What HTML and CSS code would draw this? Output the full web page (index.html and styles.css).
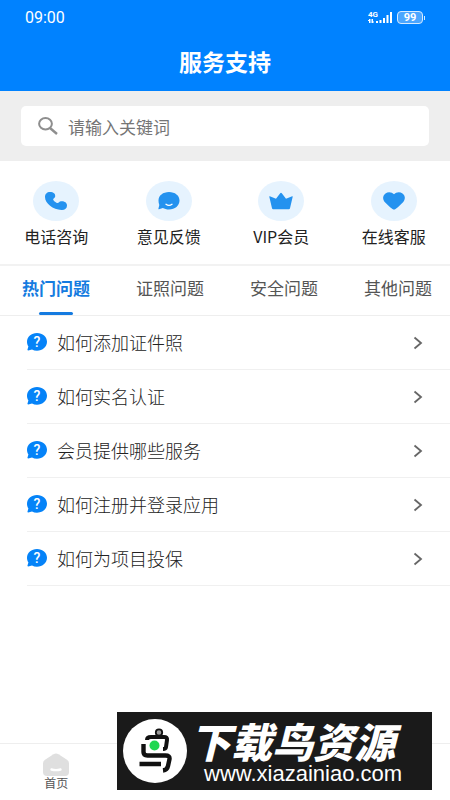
FILE: index.html
```html
<!DOCTYPE html>
<html lang="zh-CN">
<head>
<meta charset="utf-8">
<meta name="viewport" content="width=device-width, initial-scale=1">
<title>服务支持</title>
<link rel="stylesheet" href="styles.css">
</head>
<body>
<svg class="defs" aria-hidden="true">
  <symbol id="bubble" viewBox="0 0 20 18">
    <path d="M10 0C15.6 0 20 3.8 20 8.800s-4.400 8.900-10 8.900c-1.900 0-3.500-.4-5-1.200L1.200 17.400c-.5.100-.9-.3-.7-.8l.9-3C.5 12.200 0 10.600 0 8.800 0 3.800 4.400 0 10 0z" fill="#0583f8"/>
  </symbol>
  <symbol id="chevron" viewBox="0 0 10 14">
    <path d="M1.500 1.500 8 7 1.500 12.500" fill="none" stroke="#666" stroke-width="1.800"/>
  </symbol>
</svg>

<header class="header">
  <div class="status">
    <span class="clock">09:00</span>
    <span class="indicators">
      <svg width="25" height="14" viewBox="0 0 25 14" fill="#fff" aria-hidden="true">
        <text x="0" y="7" class="network">4G</text>
        <path d="M1 9h1.500v4H1zM0 10h2.500v1H0zM3.500 9H5v4H3.500zM3.500 11.500H6v1H3.500zM8 11h2v2H8zM11.500 10h2v3h-2zM15 8h2v5h-2zM18.500 5h2v8h-2zM22 2h2v11h-2z"/>
      </svg>
      <span class="battery">99</span>
    </span>
  </div>
  <h1 class="title">服务支持</h1>
</header>

<main class="main">
  <form class="search">
    <label class="search-box">
      <svg width="20" height="18" viewBox="0 0 20 18" fill="none" stroke="#8e8e8e" stroke-width="2" aria-hidden="true">
        <ellipse cx="7.500" cy="6.800" rx="6.400" ry="5.700"/><path d="M12 11l7 6" stroke-width="2.400"/>
      </svg>
      <input type="text" placeholder="请输入关键词" aria-label="请输入关键词">
    </label>
  </form>

  <nav class="shortcuts">
    <a href="#phone"><span class="disc"><svg width="24" height="20" viewBox="0 0 24 20" aria-hidden="true"><path d="M1 6C1 3 3 1 6 1c3.500 0 5.500 1.800 5.200 4.400-.1 1.300-1.600 1.800-2 2.800-.3 1 2.900 3.900 4.400 3.800 1.200-.1 1.600-1.600 3.400-1.800 3.300-.3 6 1.300 6 4.200 0 3-2.300 4.800-5.500 4.600C9 18.500 1 12.500 1 6z" fill="#2492ef"/></svg></span>电话咨询</a>
    <a href="#feedback"><span class="disc"><svg width="24" height="20" viewBox="0 0 24 20" aria-hidden="true"><path d="M12 1c6 0 10.500 3.500 10.500 8.500S18 18.500 12 18.500c-2.500 0-4.500-.6-6.200-1.500L2 18.300c-.4.100-.7-.2-.6-.6l.9-3.700C1.700 12.600 1.500 11 1.500 9.500 1.500 4.500 6 1 12 1z" fill="#2492ef"/><path d="M9 13.300c2 1.400 4 1.400 6 0" fill="none" stroke="#fff" stroke-width="1.400" stroke-linecap="round"/></svg></span>意见反馈</a>
    <a href="#vip"><span class="disc"><svg width="24" height="20" viewBox="0 0 24 20" aria-hidden="true"><path d="M.8 5.200 7 7.700 11.200 2.300q.8-.9 1.600 0L17 7.700 23.200 5.200q.7-.1.500.6L21 17.300q-.2 1-1.200 1H4.200q-1 0-1.200-1L.3 5.800q-.2-.7.500-.6z" fill="#2492ef"/></svg></span>VIP会员</a>
    <a href="#service"><span class="disc"><svg width="24" height="20" viewBox="0 0 24 20" aria-hidden="true"><path d="M12 3.300C14.200.8 18 .6 20.500 2.400c3.200 2.300 3 6.300.3 9-2 2-4.500 4.500-7.300 6.700q-1.500 1-3 0C7.700 15.900 5.200 13.400 3.200 11.400.5 8.700.3 4.700 3.500 2.400 6 .6 9.800.8 12 3.300z" fill="#2492ef"/></svg></span>在线客服</a>
  </nav>

  <div class="tabs" role="tablist">
    <button class="tab active" role="tab" aria-selected="true">热门问题</button>
    <button class="tab" role="tab" aria-selected="false">证照问题</button>
    <button class="tab" role="tab" aria-selected="false">安全问题</button>
    <button class="tab" role="tab" aria-selected="false">其他问题</button>
  </div>

  <ul class="questions">
    <li><a href="#q1"><span class="mark"><svg><use href="#bubble"/></svg><b>?</b></span><span class="question">如何添加证件照</span><svg class="chevron"><use href="#chevron"/></svg></a></li>
    <li><a href="#q2"><span class="mark"><svg><use href="#bubble"/></svg><b>?</b></span><span class="question">如何实名认证</span><svg class="chevron"><use href="#chevron"/></svg></a></li>
    <li><a href="#q3"><span class="mark"><svg><use href="#bubble"/></svg><b>?</b></span><span class="question">会员提供哪些服务</span><svg class="chevron"><use href="#chevron"/></svg></a></li>
    <li><a href="#q4"><span class="mark"><svg><use href="#bubble"/></svg><b>?</b></span><span class="question">如何注册并登录应用</span><svg class="chevron"><use href="#chevron"/></svg></a></li>
    <li><a href="#q5"><span class="mark"><svg><use href="#bubble"/></svg><b>?</b></span><span class="question">如何为项目投保</span><svg class="chevron"><use href="#chevron"/></svg></a></li>
  </ul>
</main>

<footer class="bottom-bar">
  <a class="home" href="#home">
    <svg width="26" height="23" viewBox="0 0 26 23" aria-hidden="true"><path d="M10.500 1.200q2.500-1.500 5 0l8.500 5.600q2 1.400 2 3.500V19q0 4-4 4H4q-4 0-4-4v-8.700Q0 8.200 2 6.800z" fill="#dfdfdf"/><path d="M8.500 16.500c3 .8 6 .8 9 0" fill="none" stroke="#fff" stroke-width="2.400" stroke-linecap="round"/></svg>
    首页
  </a>
  <aside class="banner">
    <svg width="64" height="64" viewBox="0 0 64 64" aria-hidden="true">
      <circle cx="32" cy="32" r="32" fill="#fff"/>
      <circle cx="36" cy="13.500" r="3.200" fill="#999" stroke="#111" stroke-width="1.800"/>
      <path d="M24 21q0-3 4-3h13q3.500 0 3 3l-1 7q-.3 2-3 2" fill="none" stroke="#111" stroke-width="4"/>
      <path d="M20.500 25v8q0 3.500 4 3.500h18q4.500 0 4 3.500l-1.500 7q-.8 4-5 4.500M16.500 45H38" fill="none" stroke="#111" stroke-width="4.400"/>
      <circle cx="31.500" cy="26.500" r="6.500" fill="#fff"/><circle cx="31.500" cy="26.500" r="5" fill="#20d750"/>
    </svg>
    <div class="banner-text">
      <strong>下载鸟资源</strong>
      <span>www.xiazainiao.com</span>
    </div>
  </aside>
</footer>
</body>
</html>
```
FILE: styles.css
```css
* { box-sizing: border-box; }

body {
  margin: 0;
  min-height: 100vh;
  padding-bottom: 10px;
  display: flex;
  flex-direction: column;
  background: #fff;
  color: #222;
  font-family: "Noto Sans CJK SC", sans-serif;
}

a { color: inherit; text-decoration: none; }

.defs { position: absolute; width: 0; height: 0; }

.header { background: #0082ff; color: #fff; }

.status {
  height: 34px;
  padding: 0 27px 0 25px;
  display: flex;
  align-items: center;
  justify-content: space-between;
  font-family: Roboto, sans-serif;
}
.clock { font-size: 16px; }
.indicators { display: flex; align-items: center; gap: 4px; }
.network { font: 700 8px Roboto, sans-serif; }
.battery {
  position: relative;
  width: 26px;
  height: 13px;
  border: 1px solid #d5eaff;
  border-radius: 4px;
  background: #4ba6ff;
  font-size: 11px;
  font-weight: 700;
  line-height: 11px;
  text-align: center;
}
.battery::after {
  content: "";
  position: absolute;
  top: 4px;
  right: -3px;
  width: 1px;
  height: 4px;
  background: #d5eaff;
}

.title {
  margin: 0;
  height: 57px;
  font-size: 23px;
  line-height: 54px;
  font-weight: 700;
  text-align: center;
}

.main { flex: 1; }

.search { padding: 15px 21px; background: #eee; }
.search-box {
  display: flex;
  align-items: center;
  gap: 10px;
  height: 40px;
  padding: 0 17px;
  border-radius: 5px;
  background: #fff;
}
.search-box input {
  flex: 1;
  min-width: 0;
  padding: 0;
  border: 0;
  outline: 0;
  background: none;
  font: 17px "Noto Sans CJK SC", sans-serif;
}
.search-box input::placeholder { color: #757575; opacity: 1; }

.shortcuts {
  display: grid;
  grid-template-columns: repeat(4, 1fr);
  padding: 20px 0 16px;
  border-bottom: 2px solid #f2f2f2;
}
.shortcuts a {
  display: flex;
  flex-direction: column;
  align-items: center;
  gap: 3px;
  font-size: 16px;
  line-height: 24px;
}
.disc {
  display: flex;
  align-items: center;
  justify-content: center;
  width: 46px;
  height: 40px;
  border-radius: 50%;
  background: #e6f3fe;
}

.tabs {
  display: flex;
  justify-content: space-between;
  padding: 0 18px 0 22px;
  border-bottom: 1px solid #eee;
}
.tab {
  height: 49px;
  padding: 0;
  border: 0;
  background: none;
  color: #555;
  font: 17px/44px "Noto Sans CJK SC", sans-serif;
  display: flex;
  flex-direction: column;
  align-items: center;
}
.tab.active { color: #157be0; font-weight: 700; }
.tab.active::after {
  content: "";
  width: 34px;
  height: 3px;
  margin-top: 2px;
  border-radius: 2px;
  background: #157be0;
}

.questions { margin: 0; padding: 0 0 0 27px; list-style: none; }
.questions li { border-bottom: 1px solid #f0f0f0; }
.questions a {
  display: flex;
  align-items: center;
  height: 53px;
  padding-right: 27px;
  font-size: 18px;
  line-height: 26px;
  font-weight: 300;
}
.question { flex: 1; padding-bottom: 2px; }
.mark {
  display: grid;
  margin-right: 10px;
  padding-bottom: 2px;
}
.mark svg, .mark b { grid-area: 1 / 1; width: 20px; height: 18px; }
.mark b {
  z-index: 1;
  color: #fff;
  font: 500 14px/18px Roboto, sans-serif;
  text-align: center;
}
.chevron { width: 10px; height: 14px; }

.bottom-bar {
  position: relative;
  border-top: 1px solid #eee;
  padding-top: 9px;
}
.home {
  display: flex;
  flex-direction: column;
  align-items: center;
  width: 25%;
  color: #555;
  font-size: 12px;
  line-height: 14px;
}

/* Site banner floats over the navigation bar */
.banner {
  position: absolute;
  left: 26%;
  right: 4%;
  bottom: 0;
  height: 78px;
  padding-left: 6px;
  display: flex;
  align-items: center;
  gap: 3px;
  background: #1a1a1a;
  color: #fff;
}
.banner svg { flex: none; }
.banner-text {
  flex: 1;
  display: flex;
  flex-direction: column;
  padding-top: 4px;
  white-space: nowrap;
}
.banner strong {
  font-size: 41px;
  font-weight: 900;
  font-style: italic;
  line-height: 42px;
}
.banner span {
  padding-left: 14px;
  font: 22px/26px "Liberation Sans", sans-serif;
}
```
